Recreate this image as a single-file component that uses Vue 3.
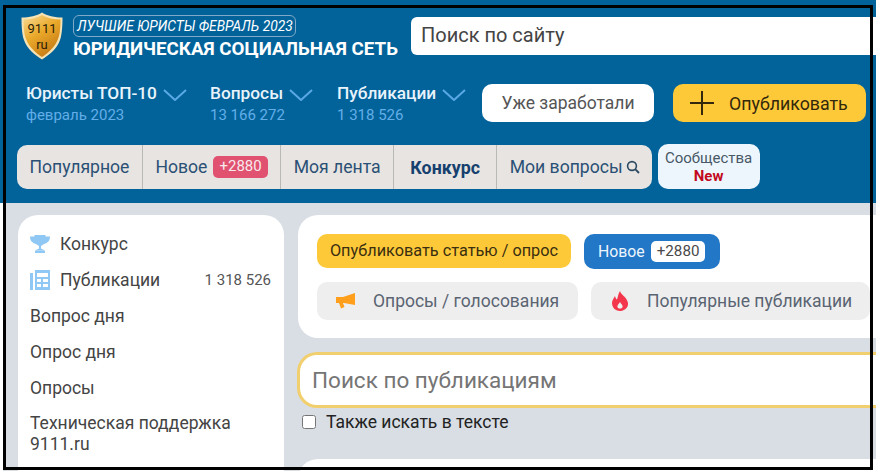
<template>
  <div class="page">
    <header class="top">
      <div class="brand-row">
        <svg class="logo" viewBox="0 0 42 48" width="42" height="48">
          <defs>
            <linearGradient id="shield" x1="0" y1="0" x2="0.6" y2="1">
              <stop offset="0" stop-color="#f7dc98" />
              <stop offset="0.5" stop-color="#eaa92a" />
              <stop offset="1" stop-color="#c87c16" />
            </linearGradient>
          </defs>
          <path d="M21 0.500C16 4 8 5.500 0.500 5.500C0.500 8 0.500 22 3 28C6 37 14 43 21 47.500C28 43 36 37 39 28C41.500 22 41.500 8 41.500 5.500C34 5.500 26 4 21 0.500Z" fill="#f6e3b5" />
          <path d="M21 3C16 6 9 7.500 2.500 7.500C2.500 10 2.500 22 5 27C8 35 15 41 21 45C27 41 34 35 37 27C39.500 22 39.500 10 39.500 7.500C33 7.500 26 6 21 3Z" fill="url(#shield)" />
          <text x="21" y="21" text-anchor="middle" class="logo-text">9111</text>
          <text x="21" y="37" text-anchor="middle" class="logo-text">ru</text>
        </svg>
        <div class="brand">
          <div class="brand-badge">ЛУЧШИЕ ЮРИСТЫ ФЕВРАЛЬ 2023</div>
          <div class="brand-name">ЮРИДИЧЕСКАЯ СОЦИАЛЬНАЯ СЕТЬ</div>
        </div>
        <div class="site-search">Поиск по сайту</div>
      </div>

      <div class="menu-row">
        <div v-for="m in menu" :key="m.title" class="menu-item" :style="{ width: m.width + 'px' }">
          <div class="menu-title">
            {{ m.title }}
            <svg class="chev" viewBox="0 0 24 12" width="24" height="12">
              <path d="M1 1L12 11L23 1" fill="none" stroke="#5aa9e6" stroke-width="2" />
            </svg>
          </div>
          <div class="menu-sub">{{ m.sub }}</div>
        </div>
        <div class="btn-earned">Уже заработали</div>
        <div class="btn-publish">
          <svg viewBox="0 0 24 24" width="24" height="24">
            <path d="M12 0V24M0 12H24" stroke="#33280c" stroke-width="2" />
          </svg>
          Опубликовать
        </div>
      </div>

      <div class="tabs-row">
        <div class="tabs">
          <div class="tab">Популярное</div>
          <div class="tab">Новое <span class="tab-count">+2880</span></div>
          <div class="tab">Моя лента</div>
          <div class="tab tab-active">Конкурс</div>
          <div class="tab tab-search">
            Мои вопросы
            <svg viewBox="0 0 14 14" width="14" height="14">
              <circle cx="6" cy="6" r="4.400" fill="none" stroke="#2d4a63" stroke-width="1.600" />
              <path d="M9.200 9.200L13 13" stroke="#2d4a63" stroke-width="1.800" />
            </svg>
          </div>
        </div>
        <div class="communities">Сообщества<b>New</b></div>
      </div>
    </header>

    <main class="body">
      <aside class="side">
        <div class="side-item">
          <svg class="side-icon" viewBox="0 0 20 20" width="20" height="20">
            <path d="M4.500 1H15.500V2.500H20C20 6.500 18 9 13.500 10.200C12.800 11 11.500 11.600 11 11.800V14.500C12 15 13.500 15.500 14 16.500H6C6.500 15.500 8 15 9 14.500V11.800C8.500 11.600 7.200 11 6.500 10.200C2 9 0 6.500 0 2.500H4.500Z" fill="#90c8f5" />
            <rect x="5" y="16.500" width="10" height="2.500" fill="#90c8f5" />
          </svg>
          Конкурс
        </div>
        <div class="side-item">
          <svg class="side-icon" viewBox="0 0 20 20" width="20" height="20">
            <path d="M0 3H3V20H0ZM5 0H20V20H5ZM7 3V7H18V3ZM7 9V12H11V9ZM13 9V12H18V9ZM7 14V17H11V14ZM13 14V17H18V14Z" fill="#90c8f5" fill-rule="evenodd" />
          </svg>
          Публикации
          <span class="side-count">1 318 526</span>
        </div>
        <div class="side-item">Вопрос дня</div>
        <div class="side-item">Опрос дня</div>
        <div class="side-item">Опросы</div>
        <div class="side-item side-long">Техническая поддержка 9111.ru</div>
      </aside>

      <section class="content">
        <div class="actions">
          <div class="actions-row">
            <div class="btn-article">Опубликовать статью / опрос</div>
            <div class="btn-new">Новое <span>+2880</span></div>
          </div>
          <div class="actions-row">
            <div class="pill pill-polls">
              <svg viewBox="0 0 20 16" width="20" height="16">
                <path d="M0 4H7L19 0V12L8 10H7L8.500 14L5 15.500L3 10H0Z" fill="#ff9f1c" />
              </svg>
              Опросы / голосования
            </div>
            <div class="pill pill-hot">
              <svg viewBox="0 0 16 20" width="16" height="20">
                <path d="M8 0C9 4 15 6 16 12C16.500 17 12 20 8 20C4 20 0 17 0 12C0 9 2 7 3 5C3.500 7 4 8 5 8.500C6 6 6 3 8 0ZM8 11C7 13 5 14 5.500 16C6 18 10 18 10.500 16C11 14 9 13 8 11Z" fill="#f4364c" fill-rule="evenodd" />
              </svg>
              Популярные публикации
            </div>
          </div>
        </div>
        <div class="pub-search">Поиск по публикациям</div>
        <label class="also">
          <input type="checkbox" />
          Также искать в тексте
        </label>
        <div class="next-card"></div>
      </section>
    </main>

    <div class="frame"></div>
  </div>
</template>

<script setup>
const menu = [
  { title: 'Юристы ТОП-10', sub: 'февраль 2023', width: 184 },
  { title: 'Вопросы', sub: '13 166 272', width: 127 },
  { title: 'Публикации', sub: '1 318 526', width: 145 }
]
</script>

<style>
html, body {
  margin: 0;
  overflow: hidden;
}
</style>

<style scoped>
.page {
  position: relative;
  width: 876px;
  height: 471px;
  overflow: hidden;
  background: #fff;
  font-family: Roboto, "Liberation Sans", sans-serif;
}

.top {
  height: 203px;
  box-sizing: border-box;
  background: #02639b;
  padding-top: 12px;
}

.brand-row {
  display: flex;
  height: 48px;
  padding-left: 21px;
}

.logo {
  flex: none;
}

.logo-text {
  font-family: Roboto, sans-serif;
  font-size: 13px;
  fill: #2a1c05;
}

.brand {
  margin-left: 10px;
  margin-top: 3px;
  width: 338px;
  flex: none;
}

.brand-badge {
  width: 223px;
  height: 22px;
  box-sizing: border-box;
  border: 1px solid #7fa9c6;
  border-radius: 6px;
  padding-left: 3px;
  font-size: 13.800px;
  line-height: 20px;
  font-style: italic;
  color: #fff;
  white-space: nowrap;
}

.brand-name {
  margin-top: 1px;
  font-size: 18.750px;
  line-height: 22px;
  font-weight: 700;
  color: #fff;
  white-space: nowrap;
}

.site-search {
  flex: none;
  width: 480px;
  height: 38px;
  margin-top: 5px;
  box-sizing: border-box;
  background: #fff;
  border-radius: 6px 0 0 6px;
  padding-left: 10px;
  font-size: 20px;
  line-height: 36px;
  color: #444;
}

.menu-row {
  display: flex;
  align-items: flex-start;
  margin-top: 20px;
  padding-left: 26px;
}

.menu-item {
  flex: none;
  padding-top: 1px;
}

.menu-title {
  display: flex;
  align-items: center;
  gap: 6px;
  height: 24px;
  font-size: 17.300px;
  font-weight: 500;
  color: #e9f3fb;
  white-space: nowrap;
}

.chev {
  margin-top: 3px;
}

.menu-sub {
  font-size: 15px;
  line-height: 20px;
  color: #62aee8;
}

.btn-earned {
  flex: none;
  width: 172px;
  height: 38px;
  margin-top: 4px;
  background: #fff;
  border-radius: 10px;
  text-align: center;
  font-size: 17.500px;
  line-height: 39px;
  color: #555;
}

.btn-publish {
  flex: none;
  display: flex;
  align-items: center;
  gap: 15px;
  width: 193px;
  height: 38px;
  box-sizing: border-box;
  margin: 4px 0 0 19px;
  padding-left: 17px;
  background: #fdc938;
  border-radius: 10px;
  font-size: 17.800px;
  color: #33280c;
}

.tabs-row {
  display: flex;
  align-items: flex-start;
  margin-top: 19px;
  padding-left: 17px;
}

.tabs {
  display: flex;
  height: 44px;
  background: #e7e4e1;
  border-radius: 10px;
  margin-top: 1px;
}

.tab {
  display: flex;
  align-items: center;
  padding: 0 12.500px;
  border-right: 1px solid #b9b9b5;
  font-size: 17.600px;
  color: #2a5075;
  white-space: nowrap;
}

.tab-active {
  width: 103px;
  box-sizing: border-box;
  justify-content: center;
  padding: 0;
  font-weight: 700;
  color: #16406e;
  font-size: 17.800px;
}

.tab-search {
  border-right: 0;
  gap: 3px;
  padding-right: 12px;
}

.tab-count {
  display: inline-block;
  margin-left: 6px;
  padding: 0 6px;
  height: 22px;
  border-radius: 5px;
  background: #e0526f;
  color: #f7e9ec;
  font-size: 15px;
  line-height: 21px;
}

.communities {
  flex: none;
  width: 102px;
  height: 45px;
  margin-left: 6px;
  padding-top: 5px;
  box-sizing: border-box;
  background: #eef6fd;
  border-radius: 10px;
  text-align: center;
  font-size: 15px;
  line-height: 18px;
  color: #475866;
}

.communities b {
  display: block;
  color: #c20a1e;
}

.body {
  display: flex;
  align-items: flex-start;
  gap: 14px;
  height: 268px;
  box-sizing: border-box;
  margin-left: 3px;
  padding: 12px 0 0 15px;
  background: #d8dee4;
}

.side {
  flex: none;
  width: 266px;
  height: 300px;
  box-sizing: border-box;
  padding: 11px 13px 11px 12px;
  background: #fff;
  border-radius: 20px;
  color: #444;
  font-size: 17.500px;
}

.side-item {
  display: flex;
  align-items: center;
  height: 36px;
}

.side-long {
  height: auto;
  line-height: 21px;
  padding-top: 7px;
}

.side-icon {
  margin-right: 10px;
}

.side-count {
  margin-left: auto;
  font-size: 15px;
  color: #555;
}

.content {
  flex: none;
  width: 600px;
}

.actions {
  width: 600px;
  height: 123px;
  box-sizing: border-box;
  padding: 19px 0 0 19px;
  background: #fff;
  border-radius: 20px 0 0 20px;
}

.actions-row {
  display: flex;
  align-items: flex-start;
  gap: 13px;
}

.actions-row + .actions-row {
  margin-top: 13px;
}

.btn-article {
  height: 34px;
  width: 254px;
  background: #fdc938;
  border-radius: 10px;
  text-align: center;
  font-size: 16.300px;
  line-height: 34px;
  color: #3a2e10;
  white-space: nowrap;
}

.btn-new {
  display: flex;
  align-items: center;
  gap: 6px;
  height: 35px;
  padding: 0 15px 0 14px;
  background: #2277c6;
  border-radius: 10px;
  font-size: 15.800px;
  color: #eef6fd;
}

.btn-new span {
  padding: 0 6px;
  height: 21px;
  border-radius: 5px;
  background: #fff;
  color: #4a4a4a;
  font-size: 15.200px;
  line-height: 21px;
}

.pill {
  display: flex;
  align-items: center;
  height: 38px;
  box-sizing: border-box;
  background: #eeeeee;
  border-radius: 10px;
  font-size: 17.500px;
  color: #5a6472;
  white-space: nowrap;
}

.pill-polls {
  width: 261px;
  padding-left: 19px;
  gap: 17px;
}

.pill-hot {
  width: 279px;
  padding-left: 21px;
  gap: 19px;
}

.pub-search {
  width: 620px;
  height: 56px;
  box-sizing: border-box;
  margin: 14px 0 0 -1px;
  padding-left: 12px;
  background: #fff;
  border: 3px solid #f2cf6e;
  border-right: 0;
  border-radius: 20px 0 0 20px;
  font-size: 22.500px;
  line-height: 50px;
  color: #757575;
}

.also {
  display: flex;
  align-items: center;
  height: 22px;
  margin-top: 3px;
  font-size: 17.500px;
  color: #222;
}

.also input {
  width: 14px;
  height: 14px;
  margin: 0 10px 0 4px;
}

.next-card {
  height: 40px;
  margin-top: 26px;
  background: #fff;
  border-radius: 20px 0 0 0;
}

.frame {
  position: absolute;
  left: 3px;
  top: 5px;
  width: 870px;
  height: 465px;
  box-sizing: border-box;
  border: 3px solid #000;
  pointer-events: none;
}
</style>
